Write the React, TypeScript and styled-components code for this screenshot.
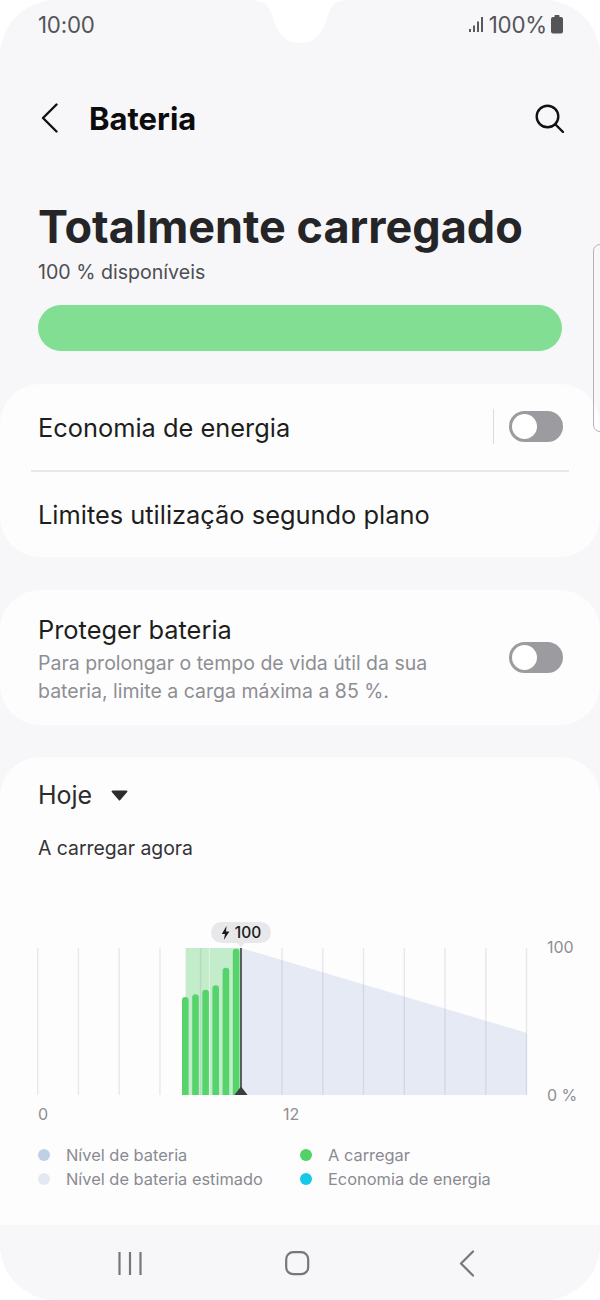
import React from "react";
import styled, { createGlobalStyle } from "styled-components";

const Global = createGlobalStyle`
  html, body { margin: 0; padding: 0; background: #ffffff; }
  * { box-sizing: border-box; }
  body { font-family: Inter, "Noto Sans", sans-serif; }
`;

const Screen = styled.div`
  position: relative;
  width: 600px;
  height: 1300px;
  background: #f7f7f9;
  border-radius: 56px;
  overflow: hidden;
  display: flex;
  flex-direction: column;

  & > * {
    flex-shrink: 0;
  }
`;

const Notch = styled.svg`
  position: absolute;
  top: 0;
  left: 250px;
`;

const StatusBar = styled.div`
  height: 48px;
  padding: 0 37px 0 38px;
  display: flex;
  align-items: center;
  justify-content: space-between;
  color: #555558;
  font-size: 22.3px;
  letter-spacing: -0.2px;
`;

const StatusRight = styled.div`
  display: flex;
  align-items: center;
  gap: 4px;
`;

const AppBar = styled.div`
  height: 70px;
  margin-top: 35px;
  padding: 0 36px 0 41px;
  display: flex;
  align-items: center;
`;

const AppTitle = styled.h1`
  margin: 0 0 0 31px;
  flex: 1;
  font-size: 31px;
  font-weight: 700;
  color: #0c0c0e;
`;

const Summary = styled.section`
  padding: 0 38px;
  margin-top: 44px;
  display: flex;
  flex-direction: column;
`;

const Headline = styled.h2`
  margin: 0;
  font-size: 45px;
  line-height: 60px;
  font-weight: 700;
  color: #252528;
`;

const Available = styled.div`
  font-size: 19.6px;
  line-height: 30px;
  color: #4e4e52;
`;

const LevelBar = styled.div`
  height: 46px;
  margin-top: 18px;
  border-radius: 23px;
  background: #82de92;
`;

const ScrollHint = styled.div`
  position: absolute;
  top: 244px;
  right: -12px;
  width: 19px;
  height: 188px;
  border: 1.5px solid #b4b4b8;
  border-radius: 7px;
`;

const Card = styled.section<{ $top: number }>`
  margin-top: ${(p) => p.$top}px;
  background: #fdfdfe;
  border-radius: 40px;
`;

const RowLine = styled.div<{ $height: number }>`
  height: ${(p) => p.$height}px;
  padding: 0 37px 0 38px;
  display: flex;
  align-items: center;
  justify-content: space-between;
`;

const RowLabel = styled.div`
  font-size: 25.4px;
  color: #1e1e20;
`;

const RowSide = styled.div`
  display: flex;
  align-items: center;
  margin-top: -1px;
`;

const VRule = styled.div`
  width: 1px;
  height: 35px;
  margin-right: 15px;
  background: #dcdcde;
`;

const HRule = styled.div`
  height: 2px;
  margin: 0 31px;
  background: #e8e8ea;
`;

const Toggle = styled.div`
  width: 54px;
  height: 31px;
  border-radius: 16px;
  background: #9c9ca0;
  padding: 3px;
`;

const Knob = styled.div`
  width: 25px;
  height: 25px;
  border-radius: 50%;
  background: #ffffff;
`;

const ProtectBody = styled.div`
  height: 135px;
  padding: 24px 37px 0 38px;
  display: flex;
  justify-content: space-between;
`;

const ProtectText = styled.div`
  width: 420px;
`;

const ProtectHint = styled.div`
  margin-top: 4px;
  font-size: 19.5px;
  line-height: 28px;
  color: #8e8e93;
`;

const ToggleSlot = styled.div`
  padding-top: 28px;
`;

const UsageCard = styled(Card)`
  height: 468px;
  padding: 20px 0 0 38px;
  border-radius: 40px 40px 0 0;
`;

const PeriodRow = styled.div`
  display: flex;
  align-items: center;
  gap: 19px;
  height: 36px;
  font-size: 25px;
  color: #2c2c2e;
`;

const NowLabel = styled.div`
  margin-top: 20px;
  font-size: 19.4px;
  line-height: 30px;
  color: #333336;
`;

const Chart = styled.div`
  position: relative;
  margin-top: 59px;
  width: 540px;
`;

const PlotRow = styled.div`
  display: flex;
`;

const PlotFrame = styled.div`
  padding-top: 22px;
  margin-left: -2px;
`;

const PlotSvg = styled.svg`
  display: block;
`;

const YAxis = styled.div`
  flex: 1;
  margin-top: 15px;
  padding-left: 18px;
  height: 168px;
  display: flex;
  flex-direction: column;
  justify-content: space-between;
  font-size: 16px;
  line-height: 20px;
  color: #8e8e93;
`;

const XAxis = styled.div`
  display: flex;
  margin-top: -1px;
  font-size: 16px;
  line-height: 20px;
  color: #8e8e93;
`;

const XTick = styled.span<{ $width: number }>`
  width: ${(p) => p.$width}px;
`;

const Pill = styled.div`
  position: absolute;
  top: 0;
  left: 173px;
  width: 60px;
  height: 21px;
  border-radius: 11px;
  background: #e8e8ea;
  display: flex;
  align-items: center;
  justify-content: center;
  gap: 5px;
  font-size: 15.5px;
  font-weight: 500;
  color: #1a1a1c;

  &::after {
    content: "";
    position: absolute;
    left: 26px;
    bottom: -4px;
    border-left: 4px solid transparent;
    border-right: 4px solid transparent;
    border-top: 4px solid #e8e8ea;
  }
`;

const Legend = styled.div`
  display: grid;
  grid-template-columns: 262px 1fr;
  grid-auto-rows: 24px;
  margin-top: 19px;
`;

const LegendItem = styled.div`
  display: flex;
  align-items: center;
  gap: 16px;
  font-size: 16.4px;
  color: #8a8a90;
`;

const LegendDot = styled.span<{ $color: string }>`
  width: 12px;
  height: 12px;
  border-radius: 50%;
  background: ${(p) => p.$color};
`;

const NavBar = styled.nav`
  height: 75px;
  background: #f7f7f9;
  display: grid;
  grid-template-columns: 259px 81px 1fr;
  align-items: center;
`;

const NavSlot = styled.div<{ $left: number }>`
  padding-left: ${(p) => p.$left}px;
  padding-top: 2px;
  display: flex;
`;

const gridX = [37.7, 78.4, 119.2, 159.9, 200.6, 282, 322.8, 363.5, 404.3, 445, 485.8, 526.5];
const bars = [
  { x: 182, top: 997 },
  { x: 192.2, top: 994.3 },
  { x: 202.3, top: 989.7 },
  { x: 212.4, top: 985.3 },
  { x: 222.6, top: 967.7 },
  { x: 232.8, top: 948.7 },
];

// Battery chart: one day of charge history on a 24-hour grid, drawn in page coordinates.
function BatteryPlot() {
  return (
    <PlotSvg width="493" height="154" viewBox="36 944 493 154">
      <rect x="185.7" y="948" width="55.3" height="147" fill="#c3ecca" />
      <polygon points="241,948 527,1033 527,1095 241,1095" fill="#e6eaf5" />
      {gridX.map((x) => (
        <line key={x} x1={x} x2={x} y1="948" y2="1095" stroke="#6a6a80" strokeOpacity="0.14" strokeWidth="1.4" />
      ))}
      <line x1="209.4" x2="209.4" y1="948" y2="1095" stroke="#ffffff" strokeOpacity="0.45" strokeWidth="1.2" />
      {bars.map((b) => (
        <path
          key={b.x}
          d={`M${b.x} 1095V${b.top + 3.3}a3.3 3.3 0 0 1 6.6 0V1095Z`}
          fill="#57d36c"
        />
      ))}
      <line x1="241" x2="241" y1="948" y2="1095" stroke="#3c3c3e" strokeWidth="1.6" />
      <polygon points="241,1086.5 247.6,1095 234.4,1095" fill="#3c3c3e" />
    </PlotSvg>
  );
}

export default function App() {
  return (
    <Screen>
      <Global />
      <StatusBar>
        <span>10:00</span>
        <StatusRight>
          <svg width="17" height="18" viewBox="0 0 17 18" fill="#5a5a5e">
            <rect x="1" y="14" width="2" height="3" />
            <rect x="5" y="10.5" width="2" height="6.5" />
            <rect x="9" y="6.5" width="2" height="10.5" />
            <rect x="13" y="2" width="2" height="15" />
          </svg>
          <span>100%</span>
          <svg width="12" height="19" viewBox="0 0 12 19" fill="#555558">
            <rect x="3.5" y="0" width="5" height="3" rx="0.8" />
            <rect x="0" y="2" width="12" height="16.5" rx="2" />
          </svg>
        </StatusRight>
      </StatusBar>
      <Notch width="100" height="44" viewBox="0 0 100 44" fill="#ffffff">
        <path d="M0 0C12 0 18 3 22 15C27 31 33 43 50 43C67 43 73 31 78 15C82 3 88 0 100 0Z" />
      </Notch>

      <AppBar>
        <svg width="17" height="30" viewBox="0 0 17 30" fill="none" stroke="#111113" strokeWidth="2.4" strokeLinecap="round" strokeLinejoin="round">
          <path d="M15.5 1.5L2 15L15.5 28.5" />
        </svg>
        <AppTitle>Bateria</AppTitle>
        <svg width="29" height="29" viewBox="0 0 29 29" fill="none" stroke="#111113" strokeWidth="2.4" strokeLinecap="round">
          <circle cx="12.5" cy="12.5" r="10.8" />
          <path d="M20.5 20.5L28 28" />
        </svg>
      </AppBar>

      <Summary>
        <Headline>Totalmente carregado</Headline>
        <Available>100 % disponíveis</Available>
        <LevelBar />
      </Summary>
      <ScrollHint />

      <Card $top={33}>
        <RowLine $height={86}>
          <RowLabel>Economia de energia</RowLabel>
          <RowSide>
            <VRule />
            <Toggle>
              <Knob />
            </Toggle>
          </RowSide>
        </RowLine>
        <HRule />
        <RowLine $height={85}>
          <RowLabel>Limites utilização segundo plano</RowLabel>
        </RowLine>
      </Card>

      <Card $top={33}>
        <ProtectBody>
          <ProtectText>
            <RowLabel>Proteger bateria</RowLabel>
            <ProtectHint>
              Para prolongar o tempo de vida útil da sua
              <br />
              bateria, limite a carga máxima a 85 %.
            </ProtectHint>
          </ProtectText>
          <ToggleSlot>
            <Toggle>
              <Knob />
            </Toggle>
          </ToggleSlot>
        </ProtectBody>
      </Card>

      <UsageCard $top={32}>
        <PeriodRow>
          Hoje
          <svg width="17" height="11" viewBox="0 0 17 11" fill="#2c2c2e">
            <path d="M1.6 0.5H15.4a1 1 0 0 1 .8 1.6L9.3 10a1 1 0 0 1-1.6 0L.8 2.1A1 1 0 0 1 1.6.5Z" />
          </svg>
        </PeriodRow>
        <NowLabel>A carregar agora</NowLabel>
        <Chart>
          <Pill>
            <svg width="9" height="14" viewBox="0 0 9 14" fill="#1a1a1c">
              <path d="M5.5 0L0.8 8H4L2.8 14L8.4 5.4H5L5.5 0Z" />
            </svg>
            100
          </Pill>
          <PlotRow>
            <PlotFrame>
              <BatteryPlot />
            </PlotFrame>
            <YAxis>
              <span>100</span>
              <span>0 %</span>
            </YAxis>
          </PlotRow>
          <XAxis>
            <XTick $width={245}>0</XTick>
            <XTick $width={40}>12</XTick>
          </XAxis>
        </Chart>
        <Legend>
          <LegendItem>
            <LegendDot $color="#bfcfe6" />
            Nível de bateria
          </LegendItem>
          <LegendItem>
            <LegendDot $color="#52d167" />
            A carregar
          </LegendItem>
          <LegendItem>
            <LegendDot $color="#e3e8f3" />
            Nível de bateria estimado
          </LegendItem>
          <LegendItem>
            <LegendDot $color="#14c8e6" />
            Economia de energia
          </LegendItem>
        </Legend>
      </UsageCard>

      <NavBar>
        <NavSlot $left={118}>
          <svg width="24" height="24" viewBox="0 0 24 24" stroke="#77777b" strokeWidth="2.2">
            <path d="M1.5 0V23M12 0V23M22.5 0V23" />
          </svg>
        </NavSlot>
        <NavSlot $left={26}>
          <svg width="25" height="25" viewBox="0 0 25 25" fill="none" stroke="#77777b" strokeWidth="2.2">
            <rect x="1.2" y="1.2" width="22" height="22" rx="7" />
          </svg>
        </NavSlot>
        <NavSlot $left={119}>
          <svg width="16" height="27" viewBox="0 0 16 27" fill="none" stroke="#77777b" strokeWidth="2.2" strokeLinecap="round" strokeLinejoin="round">
            <path d="M14 1.5L2 13.5L14 25.5" />
          </svg>
        </NavSlot>
      </NavBar>
    </Screen>
  );
}
